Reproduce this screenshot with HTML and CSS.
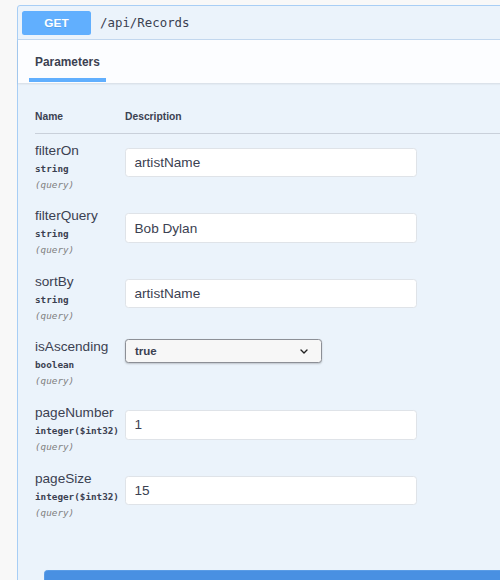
FILE: index.html
```html
<!DOCTYPE html>
<html>
<head>
<meta charset="utf-8">
<link rel="stylesheet" href="styles.css">
</head>
<body>
<div class="opblock">
  <div class="summary">
    <span class="method">GET</span>
    <span class="path">/api/Records</span>
  </div>
  <div class="section-header">
    <div class="tab">Parameters</div>
  </div>
  <div class="params">
    <div class="thead">
      <span class="col-name">Name</span>
      <span class="col-desc">Description</span>
    </div>

    <div class="row">
      <div class="col-name">
        <div class="pname">filterOn</div>
        <div class="ptype">string</div>
        <div class="pin">(query)</div>
      </div>
      <div class="col-desc"><div class="input">artistName</div></div>
    </div>

    <div class="row">
      <div class="col-name">
        <div class="pname">filterQuery</div>
        <div class="ptype">string</div>
        <div class="pin">(query)</div>
      </div>
      <div class="col-desc"><div class="input">Bob Dylan</div></div>
    </div>

    <div class="row">
      <div class="col-name">
        <div class="pname">sortBy</div>
        <div class="ptype">string</div>
        <div class="pin">(query)</div>
      </div>
      <div class="col-desc"><div class="input">artistName</div></div>
    </div>

    <div class="row">
      <div class="col-name">
        <div class="pname">isAscending</div>
        <div class="ptype">boolean</div>
        <div class="pin">(query)</div>
      </div>
      <div class="col-desc">
        <div class="select"><span>true</span>
          <svg class="chev" width="8" height="5" viewBox="0 0 8 5"><path d="M1 1 L4 4 L7 1" fill="none" stroke="#222" stroke-width="1.4" stroke-linecap="round" stroke-linejoin="round"/></svg>
        </div>
      </div>
    </div>

    <div class="row">
      <div class="col-name">
        <div class="pname">pageNumber</div>
        <div class="ptype">integer<span class="fmt">($int32)</span></div>
        <div class="pin">(query)</div>
      </div>
      <div class="col-desc"><div class="input">1</div></div>
    </div>

    <div class="row">
      <div class="col-name">
        <div class="pname">pageSize</div>
        <div class="ptype">integer<span class="fmt">($int32)</span></div>
        <div class="pin">(query)</div>
      </div>
      <div class="col-desc"><div class="input">15</div></div>
    </div>
  </div>
  <div class="execute-wrap">
    <button class="execute">Execute</button>
  </div>
</div>
</body>
</html>
```

FILE: styles.css
```css
html, body {
  margin: 0;
  padding: 0;
  overflow: hidden;
  background: #f8f8f8;
  font-family: "Liberation Sans", Arial, sans-serif;
  color: #3b4151;
}

.opblock {
  margin: 5px 0 0 17px;
  width: 640px;
  height: 700px;
  border: 1px solid #a8cef5;
  border-radius: 3px;
  background: #ebf3fb;
}

.summary {
  display: flex;
  align-items: center;
  padding: 4.5px 4px;
  border-bottom: 1px solid #c3d8ef;
}

.method {
  width: 69px;
  height: 24px;
  line-height: 24px;
  text-align: center;
  background: #61affe;
  color: #fff;
  font-weight: bold;
  font-size: 11.8px;
  border-radius: 2.5px;
  text-shadow: 0 1px 0 rgba(0,0,0,.1);
}

.path {
  margin-left: 9px;
  font-family: "DejaVu Sans Mono", "Liberation Mono", monospace;
  font-size: 12.4px;
  color: #3b4151;
}

.section-header {
  display: flex;
  align-items: center;
  height: 43px;
  padding-left: 17px;
  background: #fcfdff;
  box-shadow: 0 1px 2px rgba(0,0,0,.1);
}

.tab {
  position: relative;
  font-size: 11.9px;
  font-weight: bold;
  line-height: 14px;
  color: #3b4151;
}

.tab::after {
  content: "";
  position: absolute;
  left: -10%;
  width: 120%;
  bottom: -13px;
  height: 3.4px;
  background: #61affe;
}

.params {
  padding: 26.7px 0 0 17px;
}

.thead {
  display: flex;
  font-size: 10.3px;
  font-weight: bold;
  line-height: 14px;
  padding-bottom: 9.3px;
  border-bottom: 1px solid #c9d0da;
}

.col-name {
  width: 90px;
  flex: none;
}

.row {
  display: flex;
  padding: 7.7px 0 6.9px;
}

.pname {
  font-size: 13.6px;
  line-height: 18px;
  color: #3b4151;
}

.ptype {
  margin-top: 1px;
  font-family: "DejaVu Sans Mono", "Liberation Mono", monospace;
  font-size: 9.3px;
  font-weight: bold;
  line-height: 16px;
  color: #3b4151;
  white-space: nowrap;
}

.pin {
  font-family: "DejaVu Sans Mono", "Liberation Mono", monospace;
  font-size: 9.3px;
  font-style: italic;
  line-height: 16px;
  color: #808080;
}

.input {
  box-sizing: border-box;
  margin-top: 6px;
  width: 292px;
  height: 29.6px;
  padding: 0 8.5px;
  display: flex;
  align-items: center;
  background: #fff;
  border: 1px solid #dfe3e8;
  border-radius: 3.4px;
  font-size: 13.6px;
  color: #3b4151;
}

.select {
  box-sizing: border-box;
  margin-top: 1px;
  width: 197px;
  height: 24px;
  padding: 0 13px 0 9px;
  display: flex;
  align-items: center;
  justify-content: space-between;
  background: #f7f7f7;
  border: 1px solid #8c8f96;
  border-radius: 3.4px;
  box-shadow: 0 1px 2px rgba(0,0,0,.2);
  font-size: 11.5px;
  font-weight: bold;
  color: #3b4151;
}

.chev {
  display: block;
}

.execute-wrap {
  padding: 43px 0 0 26px;
}

.execute {
  display: block;
  width: 584px;
  height: 34px;
  padding: 3px 0 0;
  border: 1px solid #5a9ce6;
  border-radius: 3.4px;
  background: #4990e2;
  color: #fff;
  font-family: "Liberation Sans", Arial, sans-serif;
  font-size: 11.9px;
  font-weight: bold;
  line-height: 14px;
  text-align: center;
  vertical-align: top;
}
```
